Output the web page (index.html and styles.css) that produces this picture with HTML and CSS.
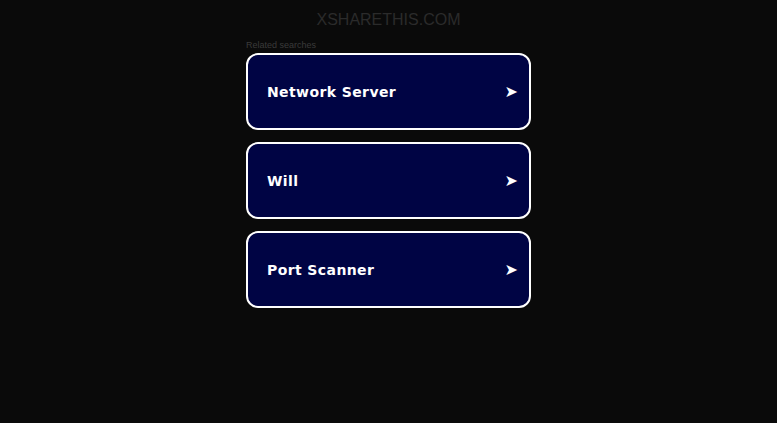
FILE: index.html
```html
<!DOCTYPE html>
<html lang="en">
<head>
  <meta charset="UTF-8">
  <title>xsharethis.com</title>
  <link rel="stylesheet" href="styles.css">
</head>
<body>

  <div class="header">
    <h1 class="domain">XSHARETHIS.COM</h1>
  </div>

  <div class="related">
    <div class="related-title">Related searches</div>
    <a class="result" href="#">
      <span class="label">Network Server</span>
      <span class="arrow">&#10148;</span>
    </a>
    <a class="result" href="#">
      <span class="label">Will</span>
      <span class="arrow">&#10148;</span>
    </a>
    <a class="result" href="#">
      <span class="label">Port Scanner</span>
      <span class="arrow">&#10148;</span>
    </a>
  </div>

</body>
</html>
```

FILE: styles.css
```css
body, html {
  height: 100%;
  margin: 0;
  background-color: #0a0a0a;
  font-family: "Liberation Sans", Arial, sans-serif;
}

.header {
  text-align: center;
  padding-top: 10px;
}

.domain {
  margin: 0;
  font-size: 16px;
  font-weight: normal;
  color: #2b2b2b;
  line-height: 20px;
}

.related {
  width: 285px;
  margin: 9px auto 0;
}

.related-title {
  font-size: 9px;
  color: #3a3a3a;
  margin-bottom: 2px;
  line-height: 12px;
}

.result {
  display: flex;
  align-items: center;
  justify-content: space-between;
  box-sizing: border-box;
  height: 77px;
  margin-bottom: 12px;
  padding: 0 11px 0 19px;
  background-color: #000444;
  border: 2px solid #ffffff;
  border-radius: 12px;
  text-decoration: none;
  color: #ffffff;
  font-family: "DejaVu Sans", Verdana, sans-serif;
  font-weight: bold;
}

.label {
  font-size: 14px;
  letter-spacing: 0.4px;
}

.arrow {
  font-size: 16px;
}
```
